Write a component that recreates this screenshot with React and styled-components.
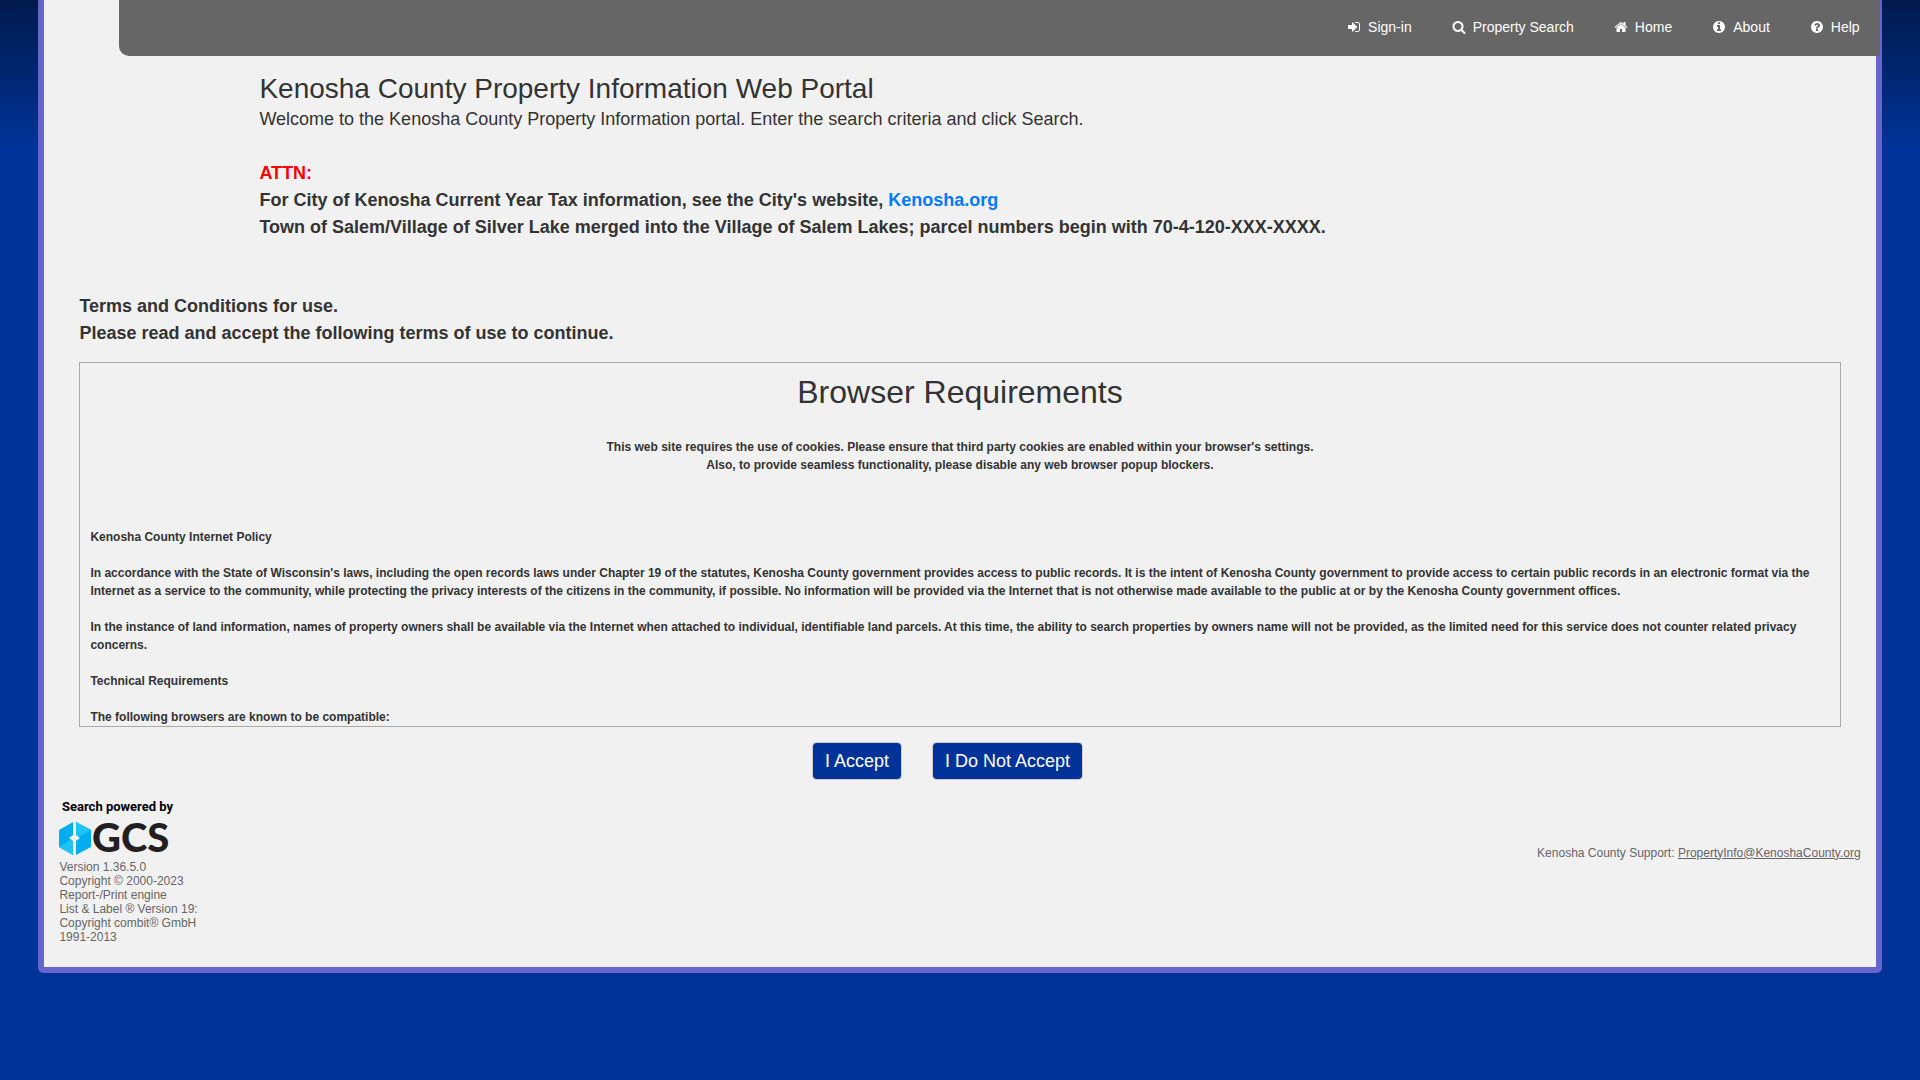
import React from "react";
import styled, { createGlobalStyle } from "styled-components";

const GlobalStyle = createGlobalStyle`
  *, *::before, *::after { box-sizing: border-box; }
  body {
    margin: 0;
    min-height: 100vh;
    background: #003399 linear-gradient(#001a4d, #003399 150px) no-repeat;
    color: #333;
    font: 18px/27px "Liberation Sans", Arial, sans-serif;
  }
`;

const Panel = styled.div`
  margin: 0 2%;
  border: 6px solid #6666cc;
  border-top: 0;
  border-radius: 0 0 6px 6px;
  background: #f1f1f1;
`;

const TopBar = styled.header`
  height: 56px;
  margin: 0 -4px 0 75px;
  padding: 0 20px 2px 0;
  display: flex;
  justify-content: flex-end;
  align-items: center;
  background: #666;
  border-bottom-left-radius: 10px;
`;

const Nav = styled.nav`
  display: flex;
  gap: 40px;
`;

const NavLink = styled.a`
  display: flex;
  align-items: center;
  gap: 7px;
  color: #fff;
  font-size: 14px;
  line-height: 21px;
  text-decoration: none;
`;

const NavIcon = styled.svg`
  width: 14px;
  height: 14px;
  fill: currentColor;
`;

const Intro = styled.section`
  padding: 16px 215px 0;
`;

const Title = styled.h1`
  margin: 0;
  font-size: 28px;
  line-height: 34px;
  font-weight: 400;
`;

const Text = styled.p`
  margin: 0;
`;

const Notice = styled.div`
  margin-top: 27px;
  font-weight: 700;
`;

const Alert = styled.span`
  color: #f00;
`;

const SiteLink = styled.a`
  color: #007bff;
  text-decoration: none;
`;

const Terms = styled.main`
  padding: 52px 35px 0;
`;

const TermsHeading = styled.h2`
  margin: 0 0 15px;
  font-size: 18px;
  line-height: 27px;
`;

const Policy = styled.div`
  height: 365px;
  padding: 10px;
  border: 1px solid #a9a9a9;
  overflow-y: scroll;
  scrollbar-width: none;
  font-size: 12px;
  line-height: 18px;
  font-weight: 700;
  p { margin: 0 0 18px; }
`;

const PolicyHead = styled.div`
  margin-bottom: 54px;
  text-align: center;
  h2 {
    margin: 0 0 26px;
    font-size: 32px;
    line-height: 39px;
    font-weight: 400;
  }
`;

const Actions = styled.div`
  display: flex;
  justify-content: center;
  gap: 30px;
  padding: 15px 25px 0 0;
`;

const Button = styled.button`
  height: 38px;
  padding: 0 12px;
  border: 1px solid #ccc;
  border-radius: 4px;
  background: #003399;
  background-clip: padding-box;
  color: #fff;
  font: inherit;
`;

const Footer = styled.footer`
  display: flex;
  justify-content: space-between;
  align-items: center;
  padding: 15px 15px 23px;
  color: #666;
  font-size: 12px;
  line-height: 14px;
`;

const Credits = styled.div`
  svg { display: block; margin-bottom: 5px; }
`;

const Support = styled.div`
  padding-bottom: 34px;
  a { color: inherit; }
`;

function Logo() {
  return (
    <svg width="130" height="60" viewBox="0 0 130 60" role="img" aria-label="Search powered by GCS">
      <text x="3" y="16" fontFamily="Liberation Sans Narrow, Roboto, sans-serif" fontWeight="700" fontSize="13" fill="#000">Search powered by</text>
      <path fill="#00aeef" d="M0 35 14 27V40L10 43 14 46V60L0 52Z" />
      <path fill="#1fc3f5" d="M0 52 11 45 14 46V60Z" />
      <path fill="#00aeef" d="M17 27 32 35V52L17 60V46L21 43 17 40Z" />
      <path fill="#1fc3f5" d="M17 27 32 35 20 42 17 40Z" />
      <text x="33" y="57" fontFamily="Lato, sans-serif" fontWeight="900" fontSize="40" fill="#231f20">GCS</text>
    </svg>
  );
}

const links = [
  ["Sign-in", "M1312 896q0 26-19 45l-544 544q-19 19-45 19t-45-19-19-45v-288h-448q-26 0-45-19t-19-45v-384q0-26 19-45t45-19h448v-288q0-26 19-45t45-19 45 19l544 544q19 19 19 45zm352-352v704q0 119-84.5 203.5t-203.5 84.5h-320q-13 0-22.5-9.5t-9.5-22.5q0-4-1-20t-.5-26.5 3-23.5 10-19.5 20.5-6.5h320q66 0 113-47t47-113v-704q0-66-47-113t-113-47h-312l-11.5-1-11.5-3-8-5.5-7-9-2-13.5q0-4-1-20t-.5-26.5 3-23.5 10-19.5 20.5-6.5h320q119 0 203.5 84.5t84.5 203.5z"],
  ["Property Search", "M1216 832q0-185-131.5-316.5t-316.5-131.5-316.5 131.5-131.5 316.5 131.5 316.5 316.5 131.5 316.5-131.5 131.5-316.5zm512 832q0 52-38 90t-90 38q-54 0-90-38l-343-342q-179 124-399 124-143 0-273.5-55.5t-225-150-150-225-55.5-273.5 55.5-273.5 150-225 225-150 273.5-55.5 273.5 55.5 225 150 150 225 55.5 273.5q0 220-124 399l343 343q37 37 37 90z"],
  ["Home", "M1472 992v480q0 26-19 45t-45 19h-384v-384h-256v384h-384q-26 0-45-19t-19-45v-480q0-1 .5-3t.5-3l575-474 575 474q1 2 1 6zm223-69l-62 74q-8 9-21 11h-3q-13 0-21-7l-692-577-692 577q-12 8-24 7-13-2-21-11l-62-74q-8-10-7-23.5t11-21.5l719-599q32-26 76-26t76 26l244 204v-195q0-14 9-23t23-9h192q14 0 23 9t9 23v408l219 182q10 8 11 21.5t-7 23.5z"],
  ["About", "M1152 1376v-160q0-14-9-23t-23-9h-96v-512q0-14-9-23t-23-9h-320q-14 0-23 9t-9 23v160q0 14 9 23t23 9h96v320h-96q-14 0-23 9t-9 23v160q0 14 9 23t23 9h448q14 0 23-9t9-23zm-128-896v-160q0-14-9-23t-23-9h-192q-14 0-23 9t-9 23v160q0 14 9 23t23 9h192q14 0 23-9t9-23zm640 416q0 209-103 385.5t-279.5 279.5-385.5 103-385.5-103-279.5-279.5-103-385.5 103-385.5 279.5-279.5 385.5-103 385.5 103 279.5 279.5 103 385.5z"],
  ["Help", "M1024 1376v-192q0-14-9-23t-23-9h-192q-14 0-23 9t-9 23v192q0 14 9 23t23 9h192q14 0 23-9t9-23zm256-672q0-88-55.5-163t-138.5-116-170-41q-243 0-371 213-15 24 8 42l132 100q7 6 19 6 16 0 25-12 53-68 86-92 34-24 86-24 48 0 85.5 26t37.5 59q0 38-20 61t-68 45q-63 28-115.5 86.5t-52.5 125.5v36q0 14 9 23t23 9h192q14 0 23-9t9-23q0-19 21.5-49.5t54.5-49.5q32-18 49-28.5t46-35 44.5-48 28-60.5 12.5-81zm384 192q0 209-103 385.5t-279.5 279.5-385.5 103-385.5-103-279.5-279.5-103-385.5 103-385.5 279.5-279.5 385.5-103 385.5 103 279.5 279.5 103 385.5z"],
];

export default function App() {
  return (
    <>
      <GlobalStyle />
      <Panel>
        <TopBar>
          <Nav>
            {links.map(([label, path]) => (
              <NavLink href="#" key={label}>
                <NavIcon viewBox="0 0 1792 1792" aria-hidden="true"><path d={path} /></NavIcon>
                {label}
              </NavLink>
            ))}
          </Nav>
        </TopBar>
        <Intro>
          <Title>Kenosha County Property Information Web Portal</Title>
          <Text>Welcome to the Kenosha County Property Information portal. Enter the search criteria and click Search.</Text>
          <Notice>
            <Text><Alert>ATTN:</Alert></Text>
            <Text>For City of Kenosha Current Year Tax information, see the City's website, <SiteLink href="#">Kenosha.org</SiteLink></Text>
            <Text>Town of Salem/Village of Silver Lake merged into the Village of Salem Lakes; parcel numbers begin with 70-4-120-XXX-XXXX.</Text>
          </Notice>
        </Intro>
        <Terms>
          <TermsHeading>Terms and Conditions for use.<br />Please read and accept the following terms of use to continue.</TermsHeading>
          <Policy>
            <PolicyHead>
              <h2>Browser Requirements</h2>
              This web site requires the use of cookies. Please ensure that third party cookies are enabled within your browser's settings.<br />
              Also, to provide seamless functionality, please disable any web browser popup blockers.
            </PolicyHead>
            <p>Kenosha County Internet Policy</p>
            <p>In accordance with the State of Wisconsin's laws, including the open records laws under Chapter 19 of the statutes, Kenosha County government provides access to public records. It is the intent of Kenosha County government to provide access to certain public records in an electronic format via the Internet as a service to the community, while protecting the privacy interests of the citizens in the community, if possible. No information will be provided via the Internet that is not otherwise made available to the public at or by the Kenosha County government offices.</p>
            <p>In the instance of land information, names of property owners shall be available via the Internet when attached to individual, identifiable land parcels. At this time, the ability to search properties by owners name will not be provided, as the limited need for this service does not counter related privacy concerns.</p>
            <p>Technical Requirements</p>
            <p>The following browsers are known to be compatible:</p>
          </Policy>
          <Actions>
            <Button type="button">I Accept</Button>
            <Button type="button">I Do Not Accept</Button>
          </Actions>
        </Terms>
        <Footer>
          <Credits>
            <Logo />
            Version 1.36.5.0<br />
            Copyright © 2000-2023<br />
            Report-/Print engine<br />
            List &amp; Label ® Version 19:<br />
            Copyright combit® GmbH<br />
            1991-2013
          </Credits>
          <Support>Kenosha County Support: <a href="mailto:PropertyInfo@KenoshaCounty.org">PropertyInfo@KenoshaCounty.org</a></Support>
        </Footer>
      </Panel>
    </>
  );
}
